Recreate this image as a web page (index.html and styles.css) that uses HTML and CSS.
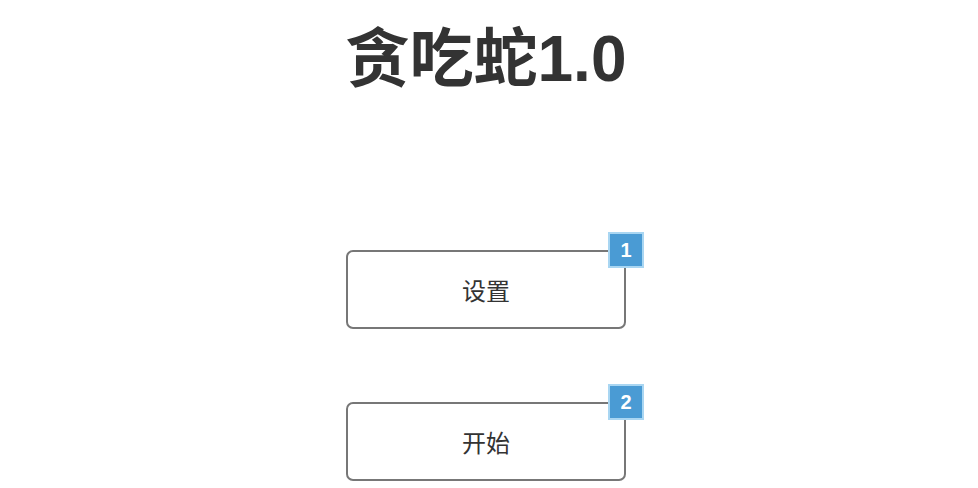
FILE: index.html
```html
<!DOCTYPE html>
<html lang="zh">
<head>
<meta charset="utf-8">
<title>贪吃蛇1.0</title>
<link rel="stylesheet" href="styles.css">
</head>
<body>
<div class="page">
  <h1 class="title">贪吃蛇1.0</h1>
  <div class="menu">
    <div class="btn">设置<span class="badge">1</span></div>
    <div class="btn">开始<span class="badge">2</span></div>
  </div>
</div>
</body>
</html>
```
FILE: styles.css
```css
html, body {
  margin: 0;
  padding: 0;
  background: #fff;
}
body {
  font-family: "Liberation Sans", "Noto Sans CJK SC", sans-serif;
  color: #333;
}
.page {
  display: flex;
  flex-direction: column;
  align-items: center;
  padding-right: 6px;
}
.title {
  margin: 22px 0 0 0;
  font-size: 64px;
  line-height: 74px;
  font-weight: bold;
  color: #333;
}
.menu {
  margin-top: 154px;
  display: flex;
  flex-direction: column;
  gap: 73px;
}
.btn {
  position: relative;
  box-sizing: border-box;
  width: 280px;
  height: 79px;
  border: 2px solid #777;
  border-radius: 7px;
  display: flex;
  align-items: center;
  justify-content: center;
  font-size: 24px;
  color: #333;
}
.badge {
  position: absolute;
  top: -20px;
  right: -20px;
  box-sizing: border-box;
  width: 36px;
  height: 36px;
  background: #4a9bd4;
  border: 2px solid #a9d6f2;
  color: #fff;
  font-weight: bold;
  font-size: 20px;
  display: flex;
  align-items: center;
  justify-content: center;
}
```
